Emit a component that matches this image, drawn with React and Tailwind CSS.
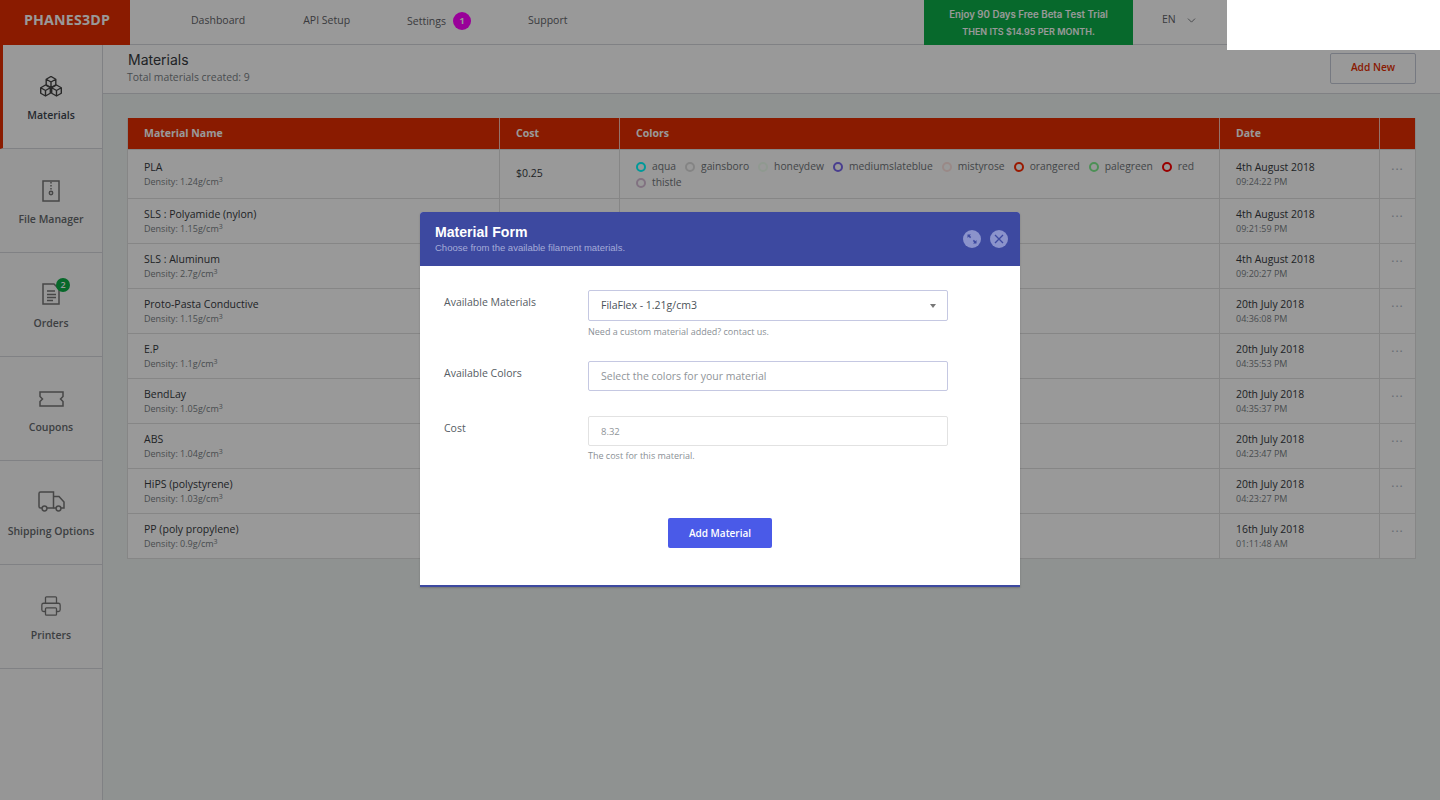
import React from 'react';
import { ChevronDown, Printer } from 'lucide-react';

const OPEN = "font-['Open_Sans',sans-serif]";

const COLORS = [
  ['aqua', 'border-[#00ffff]'],
  ['gainsboro', 'border-[#dcdcdc]'],
  ['honeydew', 'border-[#f0fff0]'],
  ['mediumslateblue', 'border-[#7b68ee]'],
  ['mistyrose', 'border-[#ffe4e1]'],
  ['orangered', 'border-[#ff2a00]'],
  ['palegreen', 'border-[#80f090]'],
  ['red', 'border-[#ff0000]'],
  ['thistle', 'border-[#d8bfd8]'],
];

const ROWS = [
  { name: 'PLA', density: '1.24g/cm', date: '4th August 2018', time: '09:24:22 PM', cost: '$0.25', colors: true },
  { name: 'SLS : Polyamide (nylon)', density: '1.15g/cm', date: '4th August 2018', time: '09:21:59 PM' },
  { name: 'SLS : Aluminum', density: '2.7g/cm', date: '4th August 2018', time: '09:20:27 PM' },
  { name: 'Proto-Pasta Conductive', density: '1.15g/cm', date: '20th July 2018', time: '04:36:08 PM' },
  { name: 'E.P', density: '1.1g/cm', date: '20th July 2018', time: '04:35:53 PM' },
  { name: 'BendLay', density: '1.05g/cm', date: '20th July 2018', time: '04:35:37 PM' },
  { name: 'ABS', density: '1.04g/cm', date: '20th July 2018', time: '04:23:47 PM' },
  { name: 'HiPS (polystyrene)', density: '1.03g/cm', date: '20th July 2018', time: '04:23:27 PM' },
  { name: 'PP (poly propylene)', density: '0.9g/cm', date: '16th July 2018', time: '01:11:48 AM' },
];

const cubePath = (x, y) =>
  `M${x} ${y - 5.5}l4.800 2.750v5.500L${x} ${y + 5.500}l-4.800-2.750v-5.500zM${x - 4.800} ${y - 2.750}L${x} ${y}l4.800-2.750M${x} ${y}v5.500`;

const CubesIcon = () => (
  <svg width="24" height="21" viewBox="0 0 24 21" fill="none" stroke="#444" strokeWidth="1.400" strokeLinejoin="round">
    <path d={cubePath(12, 6)} />
    <path d={cubePath(6.500, 14.500)} />
    <path d={cubePath(17.500, 14.500)} />
  </svg>
);

const ZipIcon = () => (
  <svg width="18" height="22" viewBox="0 0 18 22" fill="none" stroke="#777" strokeWidth="1.500">
    <rect x="1" y="1" width="16" height="20" />
    <path d="M9 2v9" strokeDasharray="1.500 1.500" />
    <circle cx="9" cy="13" r="1.700" />
  </svg>
);

const OrdersIcon = () => (
  <svg width="18" height="22" viewBox="0 0 18 22" fill="none" stroke="#777" strokeWidth="1.500">
    <path d="M1 1h11l5 5v15H1z" />
    <path d="M5 8h8M5 11.500h9M5 14.500h9M5 17.500h6" />
  </svg>
);

const TicketIcon = () => (
  <svg width="25" height="16" viewBox="0 0 25 16" fill="none" stroke="#777" strokeWidth="1.500">
    <path d="M1 1h23v4.500l-2.500 2.500 2.500 2.500V15H1v-4.500l2.500-2.500L1 5.500z" />
  </svg>
);

const TruckIcon = () => (
  <svg width="27" height="21" viewBox="0 0 27 21" fill="none" stroke="#777" strokeWidth="1.500">
    <path d="M4 17H2.500Q1 17 1 15.500V2.500Q1 1 2.500 1H15.500V17H9" />
    <path d="M15.500 5.500H21L26 11V17H23" />
    <path d="M15.500 17H18" />
    <circle cx="6.500" cy="17.500" r="2.400" />
    <circle cx="20.500" cy="17.500" r="2.400" />
  </svg>
);

const SideItem = ({ label, icon, active, badge, iconBox }) => (
  <div className={`relative h-[104px] flex flex-col items-center border-b border-[#d5d8dc] ${active ? 'bg-white border-l-[3px] border-l-[#e62e00] pr-[3px]' : 'bg-[#fafafa]'}`}>
    <div className={`relative flex items-end justify-center h-[28px] ${iconBox}`}>
      {icon}
      {badge && (
        <span className="absolute top-[1px] left-[14px] w-[14px] h-[14px] rounded-full bg-[#0cae46] text-white text-[9px] leading-[14px] text-center font-semibold">
          {badge}
        </span>
      )}
    </div>
    <span className={`mt-auto mb-[25px] text-[10.500px] leading-[16px] font-semibold whitespace-nowrap ${active ? 'text-[#3d4650]' : 'text-[#666a6e]'}`}>
      {label}
    </span>
  </div>
);

const Row = ({ row }) => (
  <div className={`grid grid-cols-[372px_120px_600px_160px_1fr] border-b border-[#dfdfdf] last:border-b-0 last:h-[44px] bg-white ${row.colors ? 'h-[49px]' : 'h-[45px]'}`}>
    <div className={`pl-4 border-r border-[#dfdfdf] ${row.colors ? 'pt-[9px]' : 'pt-[7px]'}`}>
      <p className="text-[10.500px] leading-[16px] text-[#363a3e]">{row.name}</p>
      <p className="text-[9px] leading-[13px] text-[#7a7f85]">
        Density: {row.density}<sup className="text-[7px]">3</sup>
      </p>
    </div>
    <div className="pl-4 flex items-center text-[10.500px] text-[#363a3e] border-r border-[#dfdfdf]">{row.cost}</div>
    <div className="pl-4 pr-3 pt-[9px] flex flex-wrap gap-x-[9px] border-r border-[#dfdfdf] content-start">
      {row.colors &&
        COLORS.map(([name, border]) => (
          <span key={name} className="flex items-center gap-[6px] h-4 text-[10.300px] text-[#6f7478]">
            <span className={`w-[10px] h-[10px] rounded-full border-2 ${border}`} />
            {name}
          </span>
        ))}
    </div>
    <div className={`pl-4 border-r border-[#dfdfdf] ${row.colors ? 'pt-[9px]' : 'pt-[7px]'}`}>
      <p className="text-[10.400px] leading-[16px] text-[#363a3e]">{row.date}</p>
      <p className="text-[9px] leading-[13px] text-[#7a7f85]">{row.time}</p>
    </div>
    <div className={`text-center text-[#a9b0bd] text-[12px] leading-[18px] tracking-[1px] ${row.colors ? 'pt-[7px]' : 'pt-[5px]'}`}>...</div>
  </div>
);

export default function App() {
  return (
    <div className={`relative w-[1440px] h-[800px] overflow-hidden bg-[#eef3f2] ${OPEN}`}>
      {/* top bar */}
      <header className="h-[45px] flex bg-white border-b border-[#d5d8dc]">
        <div className="w-[130px] h-[45px] pb-[5px] pl-[4px] bg-[#e62e00] flex items-center justify-center text-[14.200px] font-bold text-white tracking-[0.2px]">
          PHANES3DP
        </div>
        <nav className="flex items-center pl-[61px] pb-[3px] text-[10.500px] font-medium text-[#5f6368]">
          <span className="mr-[58px]">Dashboard</span>
          <span className="mr-[57px]">API Setup</span>
          <span className="flex items-center gap-[7px] mr-[57px]">
            <span className="pt-[2px]">Settings</span>
            <span className="w-[18px] h-[18px] rounded-full bg-[#ff00ff] text-white text-[9px] leading-[18px] text-center font-bold">1</span>
          </span>
          <span>Support</span>
        </nav>
        <div className="ml-auto w-[209px] h-[45px] bg-[#0cb04a] flex flex-col items-center justify-center font-['Inter',sans-serif] text-[9.700px] font-semibold text-white leading-[17px]">
          <span>Enjoy 90 Days Free Beta Test Trial</span>
          <span className="text-[9px]">THEN ITS $14.95 PER MONTH.</span>
        </div>
        <div className="w-[307px] pl-[29px] pb-[4px] flex items-center gap-[9px] text-[10.500px] font-medium text-[#5f6368]">
          EN <ChevronDown size={13} strokeWidth={1.500} />
        </div>
      </header>

      <div className="flex h-[755px]">
        {/* sidebar */}
        <aside className="w-[103px] shrink-0 bg-[#fafafa] border-r border-[#d5d8dc]">
          <SideItem active label="Materials" iconBox="mt-[24px]" icon={<CubesIcon />} />
          <SideItem label="File Manager" iconBox="mt-[25px]" icon={<ZipIcon />} />
          <SideItem label="Orders" badge="2" iconBox="mt-[24px]" icon={<OrdersIcon />} />
          <SideItem label="Coupons" iconBox="mt-[22px]" icon={<TicketIcon />} />
          <SideItem label="Shipping Options" iconBox="mt-[23px]" icon={<TruckIcon />} />
          <SideItem label="Printers" iconBox="mt-[24px]" icon={<Printer size={22} strokeWidth={1.400} color="#777" />} />
        </aside>

        <main className="flex-1">
          <div className="h-[49px] bg-white border-b border-[#d5d8dc] flex items-center justify-between pl-[24px] pr-[24px]">
            <div>
              <h1 className="font-['Inter',sans-serif] text-[14px] leading-[18px] text-[#363a3e] mt-[-3px] ml-[1px]">Materials</h1>
              <p className="text-[10.400px] leading-[16px] text-[#7a7f85]">Total materials created: 9</p>
            </div>
            <button className="w-[86px] h-[31px] mt-[-2px] rounded-[2px] border border-[#c5cad8] text-[10.200px] font-semibold text-[#e62e00]">
              Add New
            </button>
          </div>

          <div className="mt-[24px] mx-[24px] border border-[#dfdfdf] border-t-0">
            <div className="grid grid-cols-[372px_120px_600px_160px_1fr] h-[32px] bg-[#e62e00] text-[10.500px] font-bold text-white items-center border-b border-[#dfdfdf]">
              <span className="pl-4 h-full flex items-center border-r border-white/70">Material Name</span>
              <span className="pl-4 h-full flex items-center border-r border-white/70">Cost</span>
              <span className="pl-4 h-full flex items-center border-r border-white/70">Colors</span>
              <span className="pl-4 h-full flex items-center border-r border-white/70">Date</span>
              <span />
            </div>
            {ROWS.map((row) => (
              <Row key={row.name} row={row} />
            ))}
          </div>
        </main>
      </div>

      {/* dim layer + modal */}
      <div className="absolute inset-0 bg-black/40 flex justify-center pt-[212px]">
        <div className="w-[600px] h-[375px] bg-white rounded-t-[3px] border-b-2 border-[#3d49a0] shadow-[0_1px_2px_rgba(0,0,0,0.2)]">
          <div className="h-[54px] bg-[#3d49a0] rounded-t-[3px] flex items-center justify-between pl-[15px] pr-[12px] font-['Liberation_Sans',sans-serif]">
            <div>
              <h2 className="text-[14.100px] leading-[17px] font-bold text-white">Material Form</h2>
              <p className="text-[9.500px] leading-[13px] text-[#a5acd8]">Choose from the available filament materials.</p>
            </div>
            <div className="flex gap-[9px]">
              <span className="w-[18px] h-[18px] rounded-full bg-[#8b93cb] flex items-center justify-center">
                <svg width="12" height="12" viewBox="0 0 12 12" fill="#3d49a0">
                  <path d="M1.500 1.500h3.500L3.800 2.700 5.200 4.100 4.100 5.200 2.700 3.800 1.500 5zM10.500 10.500H7l1.200-1.200-1.400-1.400 1.100-1.100 1.400 1.400L10.500 7z" />
                </svg>
              </span>
              <span className="w-[18px] h-[18px] rounded-full bg-[#8b93cb] flex items-center justify-center">
                <svg width="10" height="10" viewBox="0 0 10 10" stroke="#3d49a0" strokeWidth="1.300">
                  <path d="M1 1l8 8M9 1l-8 8" />
                </svg>
              </span>
            </div>
          </div>

          <div className="pt-[24px] px-[24px] text-[10.500px] text-[#555c63]">
            <div className="flex h-[71px]">
              <label className="w-[144px] pt-[4px] leading-[16px]">Available Materials</label>
              <div>
                <div className="w-[360px] h-[31px] rounded-[2px] border border-[#c5c8e2] flex items-center justify-between pl-[12px] pr-[11px] text-[#4b5259]">
                  FilaFlex - 1.21g/cm3
                  <span className="w-0 h-0 border-l-[3px] border-r-[3px] border-t-[4px] border-l-transparent border-r-transparent border-t-[#777]" />
                </div>
                <p className="mt-[5px] text-[9px] leading-[12px] text-[#8a9096]">Need a custom material added? contact us.</p>
              </div>
            </div>
            <div className="flex h-[55px]">
              <label className="w-[144px] pt-[4px] leading-[16px]">Available Colors</label>
              <input
                readOnly
                placeholder="Select the colors for your material"
                className="w-[360px] h-[30px] rounded-[2px] border border-[#c5c8e2] pl-[12px] text-[10.500px] placeholder:text-[#8f9499] outline-none"
              />
            </div>
            <div className="flex h-[102px]">
              <label className="w-[144px] pt-[4px] leading-[16px]">Cost</label>
              <div>
                <input
                  readOnly
                  placeholder="8.32"
                  className="w-[360px] h-[30px] rounded-[2px] border border-[#e2e2e2] pl-[12px] text-[9.500px] placeholder:text-[#8f9499] outline-none"
                />
                <p className="mt-[4px] text-[9px] leading-[12px] text-[#8a9096]">The cost for this material.</p>
              </div>
            </div>
            <div className="flex justify-center">
              <button className="w-[104px] h-[30px] rounded-[2px] bg-[#4a5ae8] text-white text-[10px] font-semibold">
                Add Material
              </button>
            </div>
          </div>
        </div>
      </div>

      {/* white patch over the top right corner */}
      <div className="absolute top-0 right-0 w-[213px] h-[50px] bg-white" />
    </div>
  );
}
